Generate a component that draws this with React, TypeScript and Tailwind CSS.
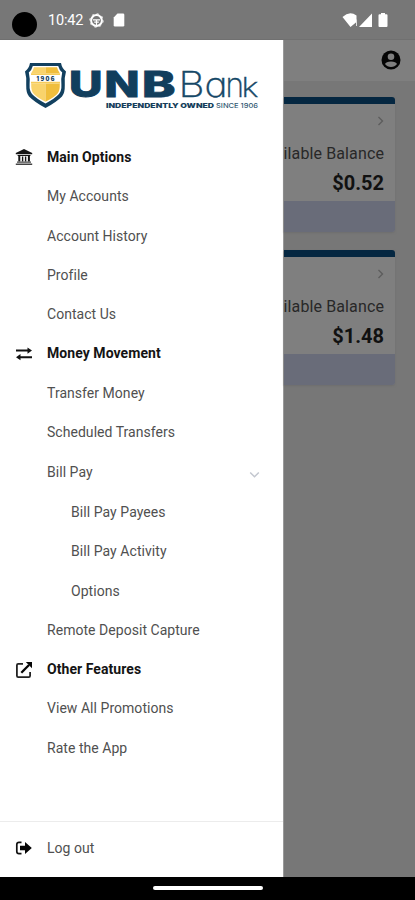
import React from "react";

type Item = { label: string; kind?: "head" | "sub"; icon?: React.ReactNode; chevron?: boolean };

const Bank = () => (
  <svg width="18" height="17" viewBox="0 0 18 17" fill="#151515">
    <path d="M9 0 17.2 4v1.3H.8V4zM2.600 6h12.800v.9H2.600zM3.300 6.500h2v6h-2zM6.900 7.500h1.400v5H6.900zM9.900 7.500h1.400v5H9.900zM12.900 6.500h2v6h-2z" />
    <path d="M2 12.400h14v1.300H2zM.8 14.500h16.400V16H.8z" fill="#444" />
  </svg>
);
const Exchange = () => (
  <svg width="18" height="14" viewBox="0 0 18 14" fill="#111">
    <path d="M1 2.600h11.500V.5L17 3.600l-4.500 3.100V4.600H1zM17 9.200H5.500V7.100L1 10.200l4.500 3.100v-2.100H17z" />
  </svg>
);
const External = () => (
  <svg width="18" height="18" viewBox="0 0 18 18" fill="none" stroke="#222" strokeWidth="1.800">
    <path d="M8 2.900H3.200Q1.900 2.900 1.900 4.200v10.600q0 1.300 1.300 1.300h10.600q1.300 0 1.300-1.300V11" />
    <path d="M6.300 11.700 14 4" stroke="#050505" strokeWidth="2.300" />
    <path d="M10.800 1H17v6.200z" fill="#050505" stroke="none" />
  </svg>
);
const Logout = () => (
  <svg width="18" height="14" viewBox="0 0 18 14">
    <path d="M6.500 1.400H4Q1.800 1.400 1.800 3.600v6.800q0 2.200 2.200 2.200h2.500" fill="none" stroke="#111" strokeWidth="1.700" />
    <path d="M5 4.700h5V1l6.800 6-6.800 6V9.300H5z" fill="#050505" />
  </svg>
);

const items: Item[] = [
  { label: "Main Options", kind: "head", icon: <Bank /> },
  { label: "My Accounts" },
  { label: "Account History" },
  { label: "Profile" },
  { label: "Contact Us" },
  { label: "Money Movement", kind: "head", icon: <Exchange /> },
  { label: "Transfer Money" },
  { label: "Scheduled Transfers" },
  { label: "Bill Pay", chevron: true },
  { label: "Bill Pay Payees", kind: "sub" },
  { label: "Bill Pay Activity", kind: "sub" },
  { label: "Options", kind: "sub" },
  { label: "Remote Deposit Capture" },
  { label: "Other Features", kind: "head", icon: <External /> },
  { label: "View All Promotions" },
  { label: "Rate the App" },
];

function Row({ item }: { item: Item }) {
  return (
    <li className={`flex items-center pl-[15px] pr-[22px] ${item.chevron ? "h-[41px]" : "h-[39.25px]"}`}>
      <span className="flex w-8 shrink-0">{item.icon}</span>
      <span
        className={
          item.kind === "head"
            ? "text-[14px] font-bold tracking-[0.060px] text-[#141414]"
            : item.kind === "sub"
              ? "pl-6 text-[14px] tracking-[0.060px] text-[#505050]"
              : "text-[14px] tracking-[0.040px] text-[#505050]"
        }
      >
        {item.label}
      </span>
      {item.chevron && (
        <svg className="ml-auto mt-1" width="13" height="8" viewBox="0 0 13 8" fill="none" stroke="#c3c7cf" strokeWidth="1.500">
          <path d="m2.200 1.500 4.300 4.300 4.300-4.300" />
        </svg>
      )}
    </li>
  );
}

function Logo() {
  return (
    <svg width="283" height="98.500" viewBox="0 40 283 98.500" className="block shrink-0 font-[Inter,sans-serif]">
      <path d="M30 63h31q1 5.500 5 8.500-2 7-1.200 13.500Q65 93 62 96.500q-6 6-16.500 11.500Q35 102.500 29 96.500q-3-3.500-2.800-11.500.8-6.500-1.200-13.500 4-3 5-8.500z" fill="#12405f" />
      <path d="M32.800 66h25.400q1 4 4 6.500-1.400 6-.8 12 .3 6.500-2.400 9.500-4.500 4.800-13.500 9.500Q36.500 98.800 32 94q-2.700-3-2.400-9.500.6-6-.8-12 3-2.500 4-6.500z" fill="#fff" />
      <path d="M34 67.300h11.500v6H31.200q2-2.800 2.800-6zM31.200 83.500h14.300v18.300Q36 97 33 93q-2-2.500-1.800-9.500z" fill="#f9d36b" />
      <path d="M45.500 67.300H57q.8 3.200 2.800 6H45.500zM45.500 83.500h14.300q.2 7-1.800 9.500-3 4-12.500 8.800z" fill="#f0be3c" />
      <path d="M31 73.300h29v1.800H31zM31 81.700h29v1.800H31z" fill="#f6cc5a" />
      <text x="36.500" y="80.600" fontSize="5.500" textLength="18" fontWeight="900" fill="#12405f">1906</text>
      <g fill="#113e5d" stroke="#113e5d" strokeWidth=".9" fontSize="35" fontWeight="800">
        <text x="69" y="97" textLength="33.500" lengthAdjust="spacingAndGlyphs">U</text>
        <text x="104.500" y="97" textLength="35" lengthAdjust="spacingAndGlyphs">N</text>
        <text x="142" y="97" textLength="33.500" lengthAdjust="spacingAndGlyphs">B</text>
      </g>
      <g fill="#164867" stroke="#164867" strokeWidth=".4" fontWeight="200">
        <text x="178.500" y="97.300" fontSize="35" textLength="26" lengthAdjust="spacingAndGlyphs">B</text>
        <text x="204.500" y="97.300" fontSize="35" textLength="23" lengthAdjust="spacingAndGlyphs" className="[font-feature-settings:'cv11']">a</text>
        <text x="225.500" y="97.300" fontSize="35" textLength="18.500" lengthAdjust="spacingAndGlyphs">n</text>
        <text x="241.500" y="97.300" fontSize="26.500" textLength="17" lengthAdjust="spacingAndGlyphs">k</text>
      </g>
      <text x="106" y="107.500" fontSize="6.500" fontWeight="900" textLength="108" lengthAdjust="spacingAndGlyphs" fill="#173f5c">INDEPENDENTLY OWNED</text>
      <text x="216" y="107.500" fontSize="6.500" fontWeight="500" textLength="42" lengthAdjust="spacingAndGlyphs" fill="#315873">SINCE 1906</text>
    </svg>
  );
}

function Card({ amount }: { amount: string }) {
  return (
    <section className="flex h-[135.500px] w-[111px] flex-col overflow-hidden rounded-r-[3px] bg-[#7f7f7f] shadow-[0_1px_2px_#6e6e6e]">
      <div className="h-[7.500px] shrink-0 bg-[#052741]" />
      <div className="flex grow flex-col items-end pr-[10.500px]">
        <svg className="mt-[11.500px] shrink-0" width="7" height="10" viewBox="0 0 7 10" fill="none" stroke="#5c5c5c" strokeWidth="1.300">
          <path d="m1.500 1 4 4-4 4" />
        </svg>
        <span className="mt-[18.500px] whitespace-nowrap text-[16px] leading-5 tracking-[0.120px] text-[#282828]">Available Balance</span>
        <span className="mt-[7px] text-[20px] font-bold leading-6 text-[#111]">{amount}</span>
      </div>
      <div className="h-[31.500px] shrink-0 bg-[#696c79]" />
    </section>
  );
}

export default function App() {
  return (
    <div className="flex h-[900px] w-[415px] flex-col overflow-hidden bg-[#777] font-['Roboto',sans-serif]">
      <header className="flex h-[39.500px] shrink-0 items-center border-b border-[#707070] pl-3 pr-[27px]">
        <span className="mt-[10px] h-[25px] w-[25px] rounded-full bg-black" />
        <span className="ml-[11px] mt-[3px] text-[14.500px] tracking-[-0.200px] text-white">10:42</span>
        <svg className="ml-[6px] mt-[2px]" width="15" height="15" viewBox="0 0 15 15" fill="none" stroke="#fff">
          <circle cx="7.500" cy="7.500" r="5.400" strokeWidth="2" />
          <circle cx="7.500" cy="7.500" r="6.700" strokeWidth="1" strokeDasharray="2.100 3.160" />
          <path d="M4 6.800h7M7.500 7v5M5.200 9.200h4.600" strokeWidth="1.200" />
        </svg>
        <svg className="ml-[9px] mt-[2px]" width="12" height="14" viewBox="0 0 12 14" fill="#fff">
          <path d="M4.500.5H10q1.300 0 1.300 1.300v10.400q0 1.300-1.300 1.300H2Q.7 13.500.7 12.200V4.500z" />
        </svg>
        <svg className="ml-auto mt-[2px]" width="46" height="16" viewBox="342 12 46 16" fill="#fff">
          <path d="M342.500 17q7-6.500 14-1.500v6.500L350.500 27zM372 13.500V27h-13z" />
          <path d="M356.500 19.500v6.500" stroke="#ddd" strokeWidth="1" />
          <path d="M381 13h4v1.200h1.500q1 0 1 1V26q0 1-1 1h-7q-1 0-1-1V15.200q0-1 1-1h1.500z" />
        </svg>
      </header>
      <main className="flex min-h-0 grow">
        <nav className="flex w-[283.500px] shrink-0 flex-col border-r border-[#999] bg-white">
          <Logo />
          <ul className="flex flex-col">
            {items.map((item) => <Row key={item.label} item={item} />)}
          </ul>
          <button className="mt-auto flex h-[56px] shrink-0 items-center border-t border-[#ececec] pb-[3px] pl-[15px] text-left text-[14px] tracking-[0.040px] text-[#505050]">
            <span className="w-8"><Logout /></span>Log out
          </button>
        </nav>
        <div className="flex min-w-0 grow flex-col">
          <div className="flex h-[41px] shrink-0 items-center justify-end bg-[#7f7f7f] pr-[14px]">
            <svg width="20" height="20" viewBox="0 0 20 20">
              <circle cx="10" cy="10" r="9.500" fill="#050505" />
              <circle cx="10" cy="6.800" r="3.300" fill="#7f7f7f" />
              <path d="M4 14q1-2.500 6-2.500t6 2.500q-2.200 3-6 3t-6-3z" fill="#7f7f7f" />
            </svg>
          </div>
          <div className="flex flex-col gap-[17.500px] pt-4">
            <Card amount="$0.52" />
            <Card amount="$1.48" />
          </div>
        </div>
      </main>
      <footer className="flex h-[23px] shrink-0 justify-center bg-black pt-[9px]">
        <span className="h-1 w-[110px] rounded-full bg-white" />
      </footer>
    </div>
  );
}
